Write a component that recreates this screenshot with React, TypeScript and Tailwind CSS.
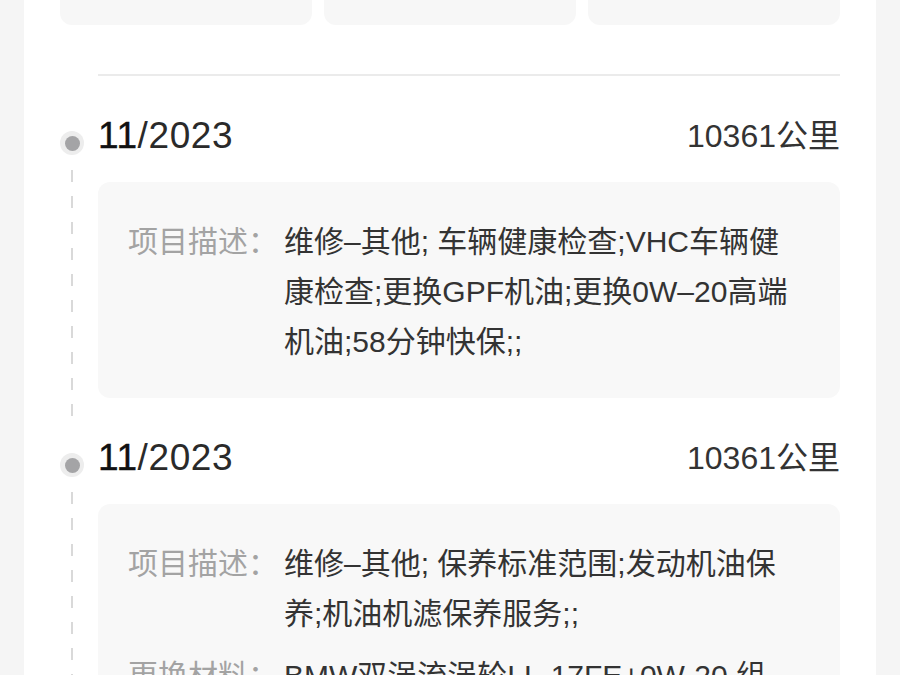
import React from 'react';

interface Row {
  label: string;
  value: string;
}

interface Record {
  month: string;
  year: string;
  mileage: string;
  rows: Row[];
}

const records: Record[] = [
  {
    month: '11',
    year: '2023',
    mileage: '10361公里',
    rows: [
      {
        label: '项目描述：',
        value: '维修–其他; 车辆健康检查;VHC车辆健康检查;更换GPF机油;更换0W–20高端机油;58分钟快保;;',
      },
    ],
  },
  {
    month: '11',
    year: '2023',
    mileage: '10361公里',
    rows: [
      { label: '项目描述：', value: '维修–其他; 保养标准范围;发动机油保养;机油机滤保养服务;;' },
      { label: '更换材料：', value: 'BMW双涡流涡轮LL-17FE+0W-20 组合机油;;' },
    ],
  },
];

const TimelineItem: React.FC<{ item: Record }> = ({ item }) => (
  <div className="flex gap-[14px]">
    <div className="flex w-6 shrink-0 flex-col items-center">
      <div className="mt-[19px] flex h-[24px] w-[24px] items-center justify-center rounded-full bg-[#ededed]">
        <div className="h-[15px] w-[15px] rounded-full bg-[#a4a4a6]" />
      </div>
      <div className="mt-[15px] mb-[14px] w-[2px] flex-1 bg-[repeating-linear-gradient(to_bottom,#d9d9d9_0px,#d9d9d9_12px,transparent_12px,transparent_26px)]" />
    </div>

    <div className="flex-1 pb-[36px]">
      <div className="flex h-12 items-center justify-between">
        <div className="text-[37px] leading-[48px] tracking-[0.6px] text-[#2a2a2a]">
          <span className="text-[#111] [-webkit-text-stroke:0.4px_#111]">{item.month}</span>/{item.year}
        </div>
        <div className="text-[32px] leading-[48px] text-[#333]">{item.mileage}</div>
      </div>

      <div className="mt-[22px] space-y-3 rounded-xl bg-[#f8f8f8] pt-[35px] pr-[44px] pb-[31px] pl-[30px]">
        {item.rows.map((row) => (
          <div key={row.label} className="flex text-[30px] leading-[50px]">
            <div className="w-[156px] shrink-0 text-[#a3a3a3]">{row.label}</div>
            <div className="min-w-0 flex-1 text-[#333]">{row.value}</div>
          </div>
        ))}
      </div>
    </div>
  </div>
);

export default function App() {
  return (
    <div className="min-h-screen bg-[#f5f5f5] px-6 font-['Liberation_Sans','Noto_Sans_CJK_SC',sans-serif]">
      <div className="min-h-screen bg-white px-9">
        <div className="grid grid-cols-3 gap-3">
          <div className="h-[25px] rounded-b-xl bg-[#f7f7f7]" />
          <div className="h-[25px] rounded-b-xl bg-[#f7f7f7]" />
          <div className="h-[25px] rounded-b-xl bg-[#f7f7f7]" />
        </div>

        <div className="mt-[49px] ml-[38px] h-[2px] bg-[#ebebeb]" />

        <div className="mt-[36px]">
          {records.map((r, i) => (
            <TimelineItem key={i} item={r} />
          ))}
        </div>
      </div>
    </div>
  );
}
